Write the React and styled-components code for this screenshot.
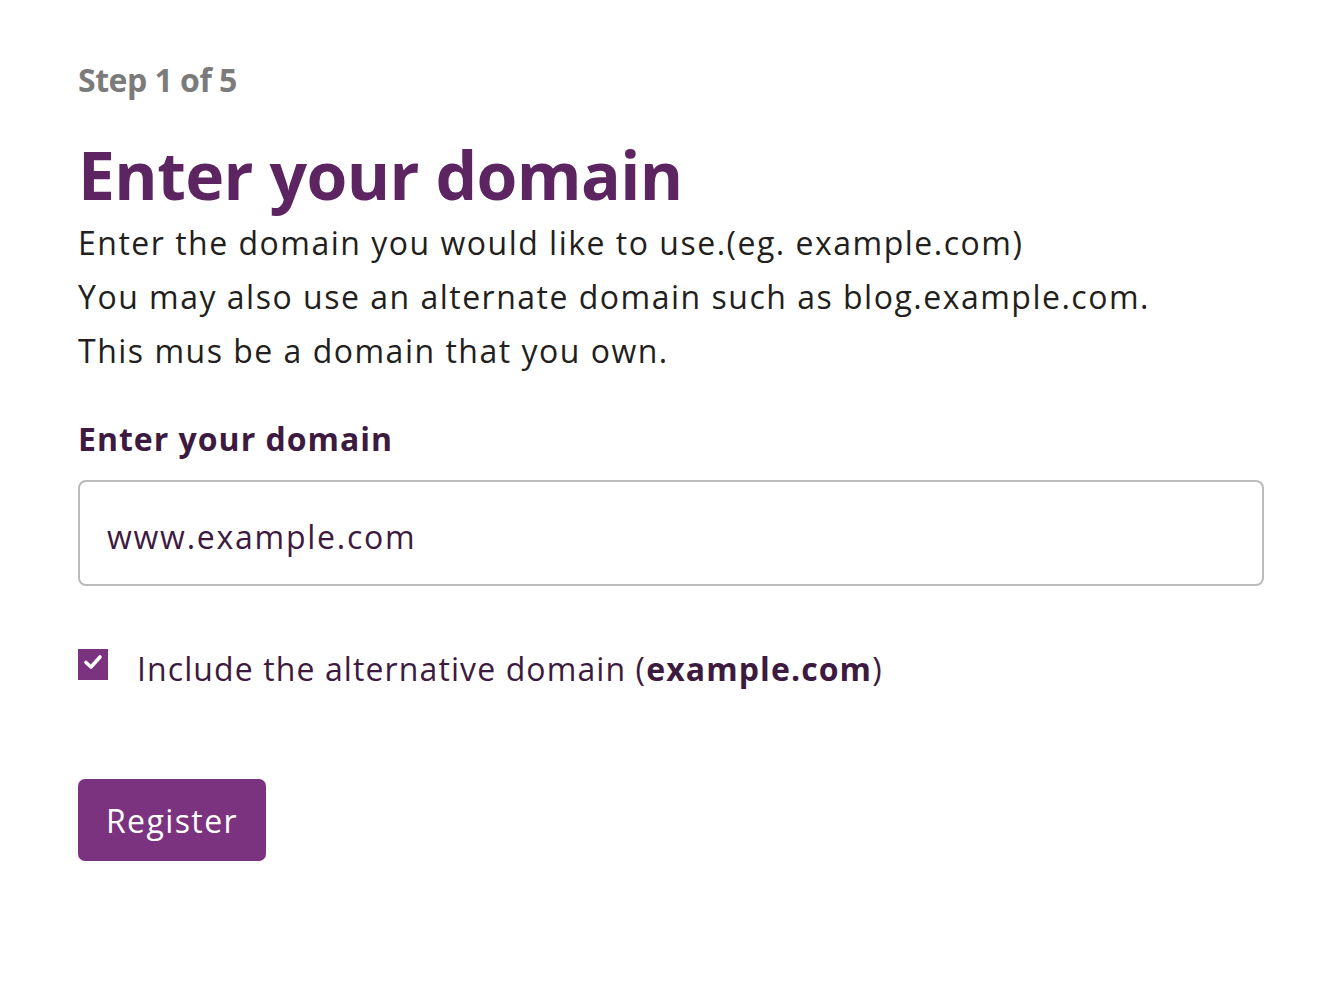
import React, { useState } from 'react';
import styled, { createGlobalStyle } from 'styled-components';

const GlobalStyle = createGlobalStyle`
  body {
    margin: 0;
    background: #ffffff;
    font-family: "Open Sans", Lato, sans-serif;
  }
`;

const App = () => {
  const [domain, setDomain] = useState('www.example.com');
  const [includeAlt, setIncludeAlt] = useState(true);

  return (
    <Page>
      <GlobalStyle />
      <Step>Step 1 of 5</Step>
      <Title>Enter your domain</Title>
      <Intro>
        <p>Enter the domain you would like to use.(eg. example.com)</p>
        <p>You may also use an alternate domain such as blog.example.com.</p>
        <p>This mus be a domain that you own.</p>
      </Intro>
      <Label htmlFor='domain'>Enter your domain</Label>
      <DomainInput id='domain' value={domain} onChange={(e) => setDomain(e.target.value)} />
      <CheckRow>
        <Box checked={includeAlt} onClick={() => setIncludeAlt(!includeAlt)}>
          {includeAlt && (
            <svg width='20' height='16' viewBox='0 0 20 16'>
              <path d='M3 8.5 L8 13 L17 3' fill='none' stroke='#fff' strokeWidth='3.6' strokeLinecap='round' strokeLinejoin='round' />
            </svg>
          )}
        </Box>
        <CheckText>
          Include the alternative domain (<b>example.com</b>)
        </CheckText>
      </CheckRow>
      <RegisterButton>Register</RegisterButton>
    </Page>
  );
};

const Page = styled.div`
  display: flex;
  flex-direction: column;
  align-items: flex-start;
  padding: 60px 62px 0 78px;
`;

const Step = styled.div`
  font-size: 32px;
  font-weight: 700;
  color: #7b7b7b;
  line-height: 40px;
  letter-spacing: -0.5px;
`;

const Title = styled.h1`
  margin: 34px 0 0;
  font-size: 66px;
  font-weight: 700;
  color: #5c2562;
  line-height: 80px;
  letter-spacing: -0.6px;
`;

const Intro = styled.div`
  margin-top: 2px;
  color: #231f20;
  font-size: 32px;
  line-height: 54px;
  letter-spacing: 1.5px;

  p {
    margin: 0;
  }
`;

const Label = styled.label`
  margin-top: 39px;
  font-size: 32px;
  font-weight: 700;
  color: #3d1a3f;
  line-height: 44px;
  letter-spacing: 1px;
`;

const DomainInput = styled.input`
  box-sizing: border-box;
  margin-top: 19px;
  width: 100%;
  height: 106px;
  padding: 6px 27px 0;
  border: 2px solid #bbbbbb;
  border-radius: 8px;
  font-family: inherit;
  font-size: 32px;
  letter-spacing: 1.75px;
  color: #3d1a3f;
  outline: none;
`;

const CheckRow = styled.div`
  display: flex;
  align-items: flex-start;
  gap: 29px;
  margin-top: 59px;
`;

const Box = styled.div`
  flex: none;
  margin-top: 4px;
  width: 30px;
  height: 31px;
  display: flex;
  align-items: center;
  justify-content: center;
  background: ${props => props.checked ? '#7b3380' : '#ffffff'};
  border: ${props => props.checked ? 'none' : '2px solid #bbbbbb'};
  cursor: pointer;

  svg {
    margin-top: -6px;
  }
`;

const CheckText = styled.span`
  padding-top: 4px;
  font-size: 32px;
  line-height: 40px;
  color: #3d1a3f;
  letter-spacing: 1.1px;

  b {
    font-weight: 700;
  }
`;

const RegisterButton = styled.button`
  margin-top: 90px;
  width: 188px;
  height: 82px;
  border: none;
  border-radius: 7px;
  background: #7b3380;
  color: #ffffff;
  font-family: inherit;
  font-size: 32px;
  letter-spacing: 1.4px;
  cursor: pointer;
`;

export default App;
